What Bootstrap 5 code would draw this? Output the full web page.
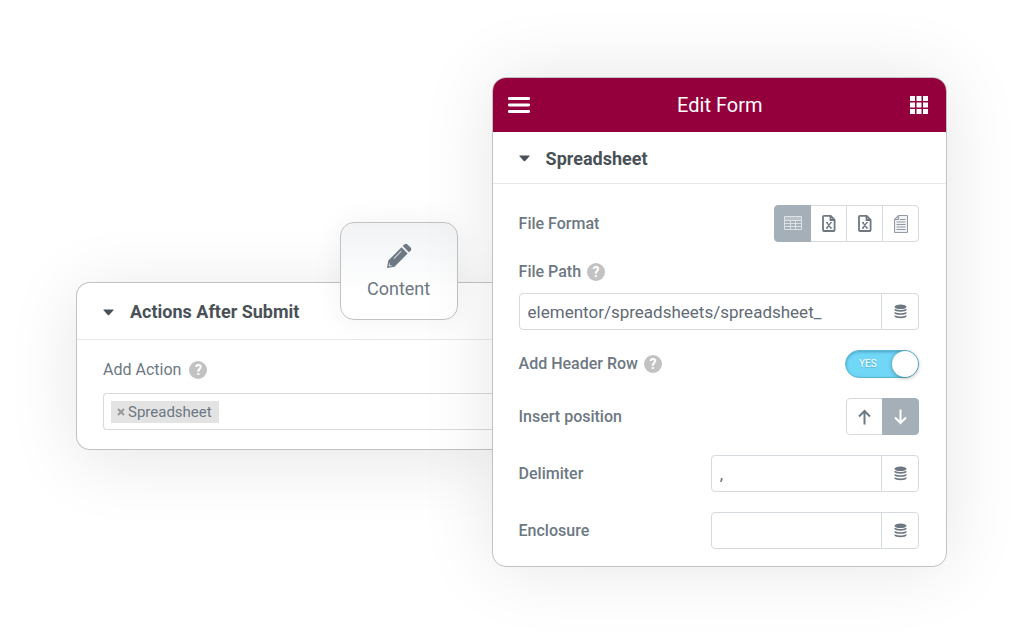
<!DOCTYPE html>
<html lang="en">
<head>
<meta charset="utf-8">
<meta name="viewport" content="width=device-width, initial-scale=1">
<title>Edit Form</title>
<link href="https://cdn.jsdelivr.net/npm/bootstrap@5.3.0/dist/css/bootstrap.min.css" rel="stylesheet">
<style>
  :root { --ink: #6d7882; --heading: #495157; --line: #d5dadf; --frame: #c2c2c2; --fill: #a4afb7; --brand: #93003c; }
  body { font-family: Roboto, sans-serif; font-size: 16px; line-height: 20px; color: var(--ink); background: #fff; overflow-x: hidden; }
  .stage { padding: 77px 77px 76px 76px; }
  .panel-box { background: #fff; border: 1px solid var(--frame); border-radius: 14px; }
  .actions-panel { flex: 416 1 0; min-width: 0; margin-top: 205px; border-right: 0; border-radius: 14px 0 0 14px; box-shadow: 0 10px 70px rgba(0,0,0,.10); }
  .form-panel { flex: 455 1 0; min-width: 0; box-shadow: 0 0 75px rgba(0,0,0,.10); z-index: 2; }
  .panel-top { height: 54px; background: var(--brand); color: #fff; border-radius: 13px 13px 0 0; padding: 0 18px 0 15px; }
  .panel-top h1 { font-size: 20px; line-height: 24px; font-weight: 400; }
  .icon-btn { border: 0; background: none; padding: 0; color: inherit; display: flex; }
  .section-title { display: flex; align-items: center; gap: 16px; width: 100%; height: 52px; padding: 2px 26px 0; border: 0; border-bottom: 1px solid #e6e9ec; background: none; color: var(--heading); font-size: 18px; font-weight: 700; text-align: left; }
  .actions-panel .section-title { height: 57px; }
  .panel-fields { padding: 21px 27px 17px 26px; }
  .name { font-weight: 500; }
  .stack { display: flex; flex-direction: column; gap: 20px; }
  .help { width: 18px; height: 18px; border-radius: 50%; background: #c2c2c2; color: #fff; font-size: 14px; line-height: 18px; font-weight: 700; text-align: center; }
  .with-help { gap: 6px; }
  .path-input { margin-top: 11px; }
  .choices > .btn { width: 37px; height: 37px; padding: 0; display: flex; align-items: center; justify-content: center; flex: none; border-color: var(--line); color: var(--ink); border-radius: 4px; background: #fff; }
  .choices > .btn-check:checked + .btn { background: var(--fill); border-color: var(--fill); color: #fff; }
  .field .form-control { height: 37px; padding: 0 8px; font-size: 17px; color: #5f6b75; border-color: var(--line); border-radius: 4px; background: #fff; }
  .field .btn { width: 38px; height: 37px; padding: 0; display: flex; align-items: center; justify-content: center; border-color: var(--line); border-radius: 4px; color: var(--ink); }
  .short { width: 52%; }
  .toggle { position: relative; width: 74px; height: 28px; display: block; }
  .toggle input { appearance: none; display: block; margin: 0; width: 100%; height: 100%; border-radius: 14px; background: #71d7f7; border: 1px solid #5bb9d8; box-shadow: inset 0 1px 3px rgba(0,60,90,.35); }
  .toggle input::after { content: ""; position: absolute; right: 1px; top: 1px; width: 26px; height: 26px; border-radius: 50%; background: #fff; box-shadow: 0 1px 4px rgba(0,0,0,.35); }
  .toggle span { position: absolute; left: 14px; top: 4px; font-size: 10px; color: #fff; text-shadow: 0 1px 1px rgba(0,0,0,.2); }
  .tab-tile { position: absolute; right: 34px; top: -61px; width: 118px; height: 98px; border: 1px solid #c2c2c2; border-radius: 14px; background: linear-gradient(#f1f3f5, #fff 75%); color: var(--ink); font-size: 18px; gap: 10px; padding: 0 0 0; box-shadow: 0 0 30px rgba(0,0,0,.06); z-index: 1; }
  .actions-fields { padding: 20px 0 19px 26px; }
  .tags { height: 37px; margin-top: 13px; padding: 0 7px; border: 1px solid var(--line); border-right: 0; border-radius: 4px 0 0 4px; }
  .tag-item { background: #e3e3e3; height: 22px; padding: 0 7px 0 6px; font-size: 15px; gap: 3px; }
</style>
</head>
<body>
<main class="stage d-flex align-items-start">

  <section class="actions-panel panel-box position-relative" aria-label="Actions After Submit">
    <button type="button" class="section-title">
      <svg width="11" height="7" viewBox="0 0 11 7" aria-hidden="true"><path d="M1 .5h9q1 0 .4.8L6.200 6q-.7.700-1.400 0L.6 1.300Q0 .5 1 .5z" fill="currentColor"/></svg>
      Actions After Submit
    </button>
    <button type="button" class="tab-tile d-flex flex-column align-items-center justify-content-center">
      <svg width="26" height="26" viewBox="0 0 26 26" aria-hidden="true">
        <path d="M1 25l1.300-7.500L15.500 4.300l6.200 6.200L8.500 23.700z" fill="currentColor"/>
        <path d="M16.700 3.100l1.900-1.900q1.300-1.100 2.600 0l3.600 3.600q1.100 1.300 0 2.600l-1.900 1.900z" fill="currentColor"/>
        <path d="M7.800 15.600l7.400-7.400" fill="none" stroke="#c9ced3" stroke-width="1.200"/>
        <path d="M3.300 19.300l.4 2.900 2.700.5-2.400.8-1.300-1.300z" fill="#f8f9fa"/>
      </svg>
      <span>Content</span>
    </button>
    <div class="actions-fields">
      <div class="d-flex align-items-center gap-2">
        <span id="add-action">Add Action</span><span class="help">?</span>
      </div>
      <div class="tags d-flex align-items-center" role="group" aria-labelledby="add-action">
        <span class="tag-item d-flex align-items-center">
          <button type="button" class="icon-btn" aria-label="Remove"><svg width="8" height="8" viewBox="0 0 8 8"><path d="M1 1l6 6M7 1L1 7" stroke="#999" stroke-width="2"/></svg></button>
          Spreadsheet
        </span>
      </div>
    </div>
  </section>

  <form class="form-panel panel-box position-relative">
    <header class="panel-top d-flex align-items-center justify-content-between">
      <button type="button" class="icon-btn" aria-label="Menu"><svg width="22" height="16" viewBox="0 0 22 16"><path d="M1.300 1.500h19.400M1.300 8h19.400M1.300 14.500h19.400" stroke="currentColor" stroke-width="2.800" stroke-linecap="round"/></svg></button>
      <h1 class="m-0">Edit Form</h1>
      <button type="button" class="icon-btn" aria-label="Widgets"><svg width="18" height="18" viewBox="0 0 18 18" fill="currentColor"><path d="M0 0h5v5H0zM6.500 0h5v5h-5zM13 0h5v5h-5zM0 6.500h5v5H0zM6.500 6.500h5v5h-5zM13 6.500h5v5h-5zM0 13h5v5H0zM6.500 13h5v5h-5zM13 13h5v5h-5z"/></svg></button>
    </header>
    <button type="button" class="section-title">
      <svg width="11" height="7" viewBox="0 0 11 7" aria-hidden="true"><path d="M1 .5h9q1 0 .4.8L6.200 6q-.7.700-1.400 0L.6 1.300Q0 .5 1 .5z" fill="currentColor"/></svg>
      Spreadsheet
    </button>

    <div class="panel-fields stack">
      <div class="d-flex align-items-center justify-content-between">
        <span class="name" id="format">File Format</span>
        <div class="btn-group choices" role="group" aria-labelledby="format">
          <input type="radio" class="btn-check" name="format" id="f-table" checked>
          <label class="btn" for="f-table" aria-label="Table"><svg width="18" height="15" viewBox="0 0 18 15" fill="none" stroke="#dde2e6" stroke-width="1"><path d="M.5 .5h17v13H.5zM.5 4.500h17M.5 7.500h17M.5 10.500h17M6.500 4.500v9M11.500 4.500v9"/><path d="M1 2.500h16" stroke="#b9c2c9" stroke-width="3"/></svg></label>
          <input type="radio" class="btn-check" name="format" id="f-xls">
          <label class="btn" for="f-xls" aria-label="XLS"><svg width="14" height="17" viewBox="0 0 14 17" fill="none" stroke="currentColor" stroke-width="1.800"><path d="M2 .9h6.700l3.900 3.900V15q0 1-1 1H2q-1 0-1-1V1.900q0-1 1-1zM8.500 1v4h4"/><path d="M4.900 7.700l3.900 5.300M8.800 7.700L4.900 13M4 7.700h2M8 7.700h1.800M4 13h2M8 13h1.800" stroke-width="1.300"/></svg></label>
          <input type="radio" class="btn-check" name="format" id="f-xlsx">
          <label class="btn" for="f-xlsx" aria-label="XLSX"><svg width="14" height="17" viewBox="0 0 14 17" fill="none" stroke="currentColor" stroke-width="1.800"><path d="M2 .9h6.700l3.900 3.900V15q0 1-1 1H2q-1 0-1-1V1.900q0-1 1-1zM8.500 1v4h4"/><path d="M4.900 7.700l3.900 5.300M8.800 7.700L4.900 13M4 7.700h2M8 7.700h1.800M4 13h2M8 13h1.800" stroke-width="1.300"/></svg></label>
          <input type="radio" class="btn-check" name="format" id="f-text">
          <label class="btn" for="f-text" aria-label="Text"><svg width="14" height="18" viewBox="0 0 14 18" fill="#f1f3f4" stroke="#939ca4" stroke-width="1.100"><path d="M4.500 .5h8q1 0 1 1v15q0 1-1 1h-11q-1 0-1-1V4.500zM4.500 .5v4h-4M6 4.500h5.500M2.500 7h9M2.500 9.500h9M2.500 12h9M2.500 14.500h9"/></svg></label>
        </div>
      </div>

      <div>
        <div class="d-flex align-items-center with-help">
          <label class="name" for="path">File Path</label><span class="help">?</span>
        </div>
        <div class="input-group field path-input">
          <input type="text" class="form-control" id="path" value="elementor/spreadsheets/spreadsheet_">
          <button type="button" class="btn" aria-label="Dynamic tags"><svg width="13" height="15" viewBox="0 0 13 15"><use href="#db"/></svg></button>
        </div>
      </div>

      <div class="d-flex align-items-center justify-content-between">
        <div class="d-flex align-items-center with-help">
          <label class="name" for="header-row">Add Header Row</label><span class="help">?</span>
        </div>
        <label class="toggle"><input type="checkbox" id="header-row" checked><span>YES</span></label>
      </div>

      <div class="d-flex align-items-center justify-content-between">
        <span class="name" id="position">Insert position</span>
        <div class="btn-group choices" role="group" aria-labelledby="position">
          <input type="radio" class="btn-check" name="position" id="p-up">
          <label class="btn" for="p-up" aria-label="Top"><svg width="13" height="16" viewBox="0 0 13 16" fill="none" stroke="currentColor" stroke-width="2"><path d="M6.500 15.500V2M1 7.500L6.500 2 12 7.500"/></svg></label>
          <input type="radio" class="btn-check" name="position" id="p-down" checked>
          <label class="btn" for="p-down" aria-label="Bottom"><svg width="13" height="16" viewBox="0 0 13 16" fill="none" stroke="currentColor" stroke-width="2"><path d="M6.500 .5V14M1 8.500L6.500 14 12 8.500"/></svg></label>
        </div>
      </div>

      <div class="d-flex align-items-center justify-content-between">
        <label class="name" for="delimiter">Delimiter</label>
        <div class="input-group field short">
          <input type="text" class="form-control" id="delimiter" value=",">
          <button type="button" class="btn" aria-label="Dynamic tags"><svg width="13" height="15" viewBox="0 0 13 15"><use href="#db"/></svg></button>
        </div>
      </div>

      <div class="d-flex align-items-center justify-content-between">
        <label class="name" for="enclosure">Enclosure</label>
        <div class="input-group field short">
          <input type="text" class="form-control" id="enclosure">
          <button type="button" class="btn" aria-label="Dynamic tags"><svg width="13" height="15" viewBox="0 0 13 15"><use href="#db"/></svg></button>
        </div>
      </div>
    </div>
  </form>
</main>

<svg width="0" height="0" class="position-absolute" aria-hidden="true">
  <symbol id="db" viewBox="0 0 13 15">
    <ellipse cx="6.500" cy="2.800" rx="6" ry="2.300" fill="currentColor"/>
    <path d="M.5 4.800q6 2.400 12 0v1.300q-1 1.600-6 1.600t-6-1.600zM.5 8q6 2.400 12 0v1.200q-1 1.600-6 1.600t-6-1.600zM.5 11.200q6 2.400 12 0v1.400q-1 1.700-6 1.700t-6-1.700z" fill="currentColor"/>
  </symbol>
</svg>
<script src="https://cdn.jsdelivr.net/npm/bootstrap@5.3.0/dist/js/bootstrap.bundle.min.js"></script>
</body>
</html>
